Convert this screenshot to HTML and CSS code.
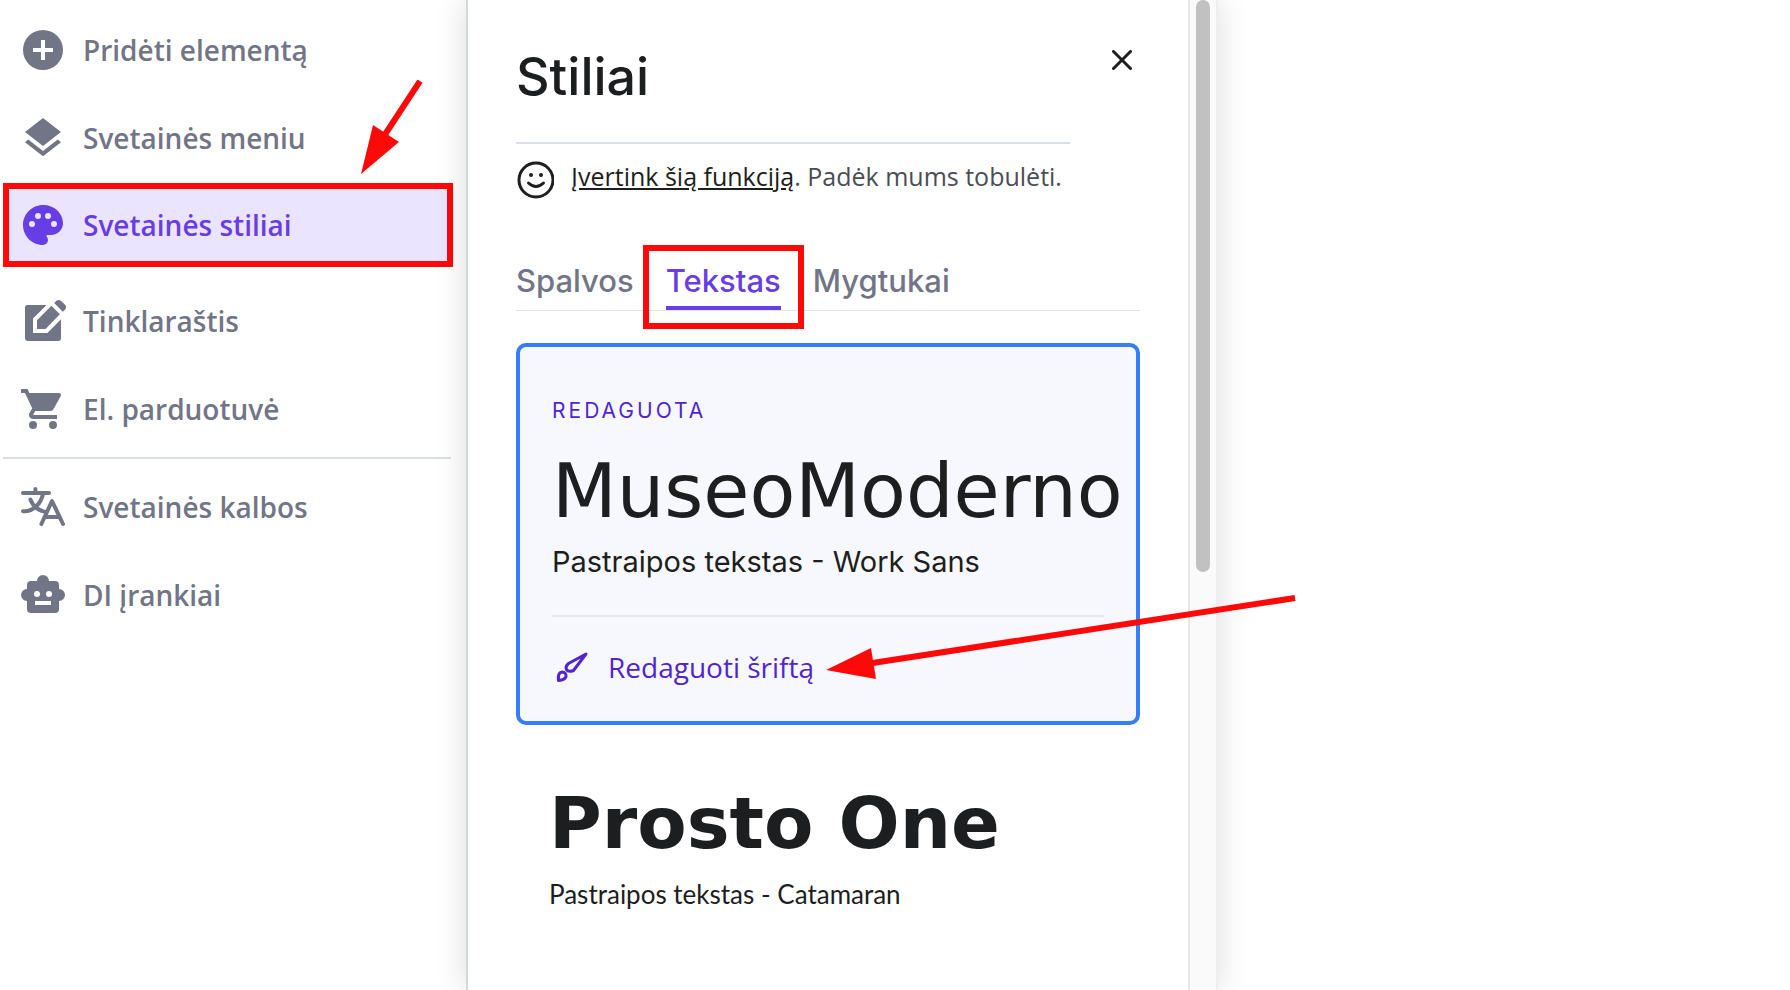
FILE: index.html
```html
<!DOCTYPE html>
<html lang="lt">
<head>
<meta charset="utf-8">
<title>Stiliai</title>
<link rel="stylesheet" href="styles.css">
</head>
<body>
<div class="app">
  <nav class="sidebar">
    <a class="item" href="#"><svg class="icon" viewBox="0 0 24 24"><path d="M12 2a10 10 0 1 0 0 20 10 10 0 0 0 0-20zm5 11h-4v4h-2v-4H7v-2h4V7h2v4h4z"/></svg>Pridėti elementą</a>
    <a class="item" href="#"><svg class="icon" viewBox="0 0 24 24"><path d="M11.99 18.54l-7.37-5.73L3 14.07l9 7 9-7-1.63-1.27zM12 16l7.36-5.73L21 9l-9-7-9 7 1.63 1.27z"/></svg>Svetainės meniu</a>
    <a class="item item-active" href="#"><svg class="icon" viewBox="0 0 24 24"><path d="M12 2C6.500 2 2 6.500 2 12s4.500 10 10 10a2.500 2.500 0 0 0 2.500-2.500c0-.61-.23-1.200-.64-1.670a.5.5 0 0 1 .36-.83H16c3.310 0 6-2.690 6-6 0-4.960-4.490-9-10-9zm5.500 11a1.500 1.500 0 1 1 0-3 1.500 1.500 0 0 1 0 3zm-3-4a1.500 1.500 0 1 1 0-3 1.500 1.500 0 0 1 0 3zM5 11.500a1.500 1.500 0 1 1 3 0 1.500 1.500 0 0 1-3 0zm6-4a1.500 1.500 0 1 1-3 0 1.500 1.500 0 0 1 3 0z"/></svg>Svetainės stiliai</a>
    <a class="item item-spaced" href="#"><svg class="icon" viewBox="0 0 24 24"><path d="M3 5.200Q3 4 4.200 4H13.800L7 10.700V18H14.200L21 11.100V20.800Q21 22 19.800 22H4.200Q3 22 3 20.800z"/><path d="M9 16v-4.400l7.200-7.200 4.200 4.200L13.300 16z"/><path d="M17.600 3l1.100-1.100q1.200-.9 2.500.2l1.700 1.700q1.200 1.200.2 2.400L21.900 7.400z"/></svg>Tinklaraštis</a>
    <a class="item" href="#"><svg class="icon" viewBox="0 0 24 24"><path d="M7 18a2 2 0 1 0 0 4 2 2 0 0 0 0-4zM1 2v2h2l3.600 7.590-1.350 2.450C4.520 15.370 5.480 17 7 17h12v-2H7.420a.25.25 0 0 1-.22-.37L8.100 13h7.450c.75 0 1.410-.41 1.750-1.030l3.580-6.490A1 1 0 0 0 20 4H5.210l-.94-2zm16 16a2 2 0 1 0 0 4 2 2 0 0 0 0-4z"/></svg>El. parduotuvė</a>
    <hr class="rule">
    <a class="item" href="#"><svg class="icon line" viewBox="0 0 24 24"><path d="M2 5h13M8.200 3v2M12 5.500c-1 4.500-4.500 9-10 8.600M5.700 8.300c1.200 3 3.800 5.300 7 6M11.200 20.500L16.500 9l5.500 11.500M13.500 17h6.500"/></svg>Svetainės kalbos</a>
    <a class="item" href="#"><svg class="icon" viewBox="0 0 24 24"><path d="M20 9V7a2 2 0 0 0-2-2h-3a3 3 0 0 0-6 0H6a2 2 0 0 0-2 2v2a3 3 0 0 0 0 6v4a2 2 0 0 0 2 2h12a2 2 0 0 0 2-2v-4a3 3 0 0 0 0-6zM7.500 11.500a1.500 1.500 0 1 1 3 0 1.500 1.500 0 0 1-3 0zM16 17H8v-2h8zm-1-4a1.500 1.500 0 1 1 0-3 1.500 1.500 0 0 1 0 3z"/></svg>DI įrankiai</a>
  </nav>
  <main class="panel">
    <div class="content">
      <header class="head">
        <h1 class="title">Stiliai</h1>
        <button class="close" type="button" aria-label="Uždaryti"><svg viewBox="0 0 20 20"><path d="M1.500 1.500l17 17M18.500 1.500l-17 17"/></svg></button>
      </header>
      <p class="feedback">
        <svg class="smile" viewBox="0 0 38 38"><circle cx="20" cy="19" r="17"/><path d="M12.500 22q7.500 7 15 0"/><circle class="eye" cx="15" cy="14" r="2"/><circle class="eye" cx="25" cy="14" r="2"/></svg>
        <span><a class="rate" href="#">Įvertink šią funkciją</a>. Padėk mums tobulėti.</span>
      </p>
      <div class="tabs" role="tablist">
        <button class="tab" type="button" role="tab">Spalvos</button>
        <button class="tab tab-active" type="button" role="tab" aria-selected="true">Tekstas</button>
        <button class="tab" type="button" role="tab">Mygtukai</button>
      </div>
      <section class="card">
        <p class="badge">REDAGUOTA</p>
        <h2 class="font-name">MuseoModerno</h2>
        <p class="sample sample-work">Pastraipos tekstas - Work Sans</p>
        <button class="edit" type="button"><svg class="brush" viewBox="0 0 32 32"><path d="M30 3L12.500 12.500Q9 15.500 10.500 18.500T17.500 19.500z"/><path d="M2.500 29.500Q1.500 21.500 6 21Q10.500 21.500 10 25.500Q9 29 2.500 29.500z"/></svg>Redaguoti šriftą</button>
      </section>
      <section class="option">
        <h2 class="font-name font-bold">Prosto One</h2>
        <p class="sample sample-cata">Pastraipos tekstas - Catamaran</p>
      </section>
    </div>
    <div class="track"><div class="thumb"></div></div>
  </main>
  <svg class="arrow arrow-menu" viewBox="0 0 64 96"><path d="M60 1L24 56" /><polygon points="1,94 13,45 39,62"/></svg>
  <svg class="arrow arrow-edit" viewBox="0 0 470 86"><path d="M469 3L40 69"/><polygon points="0,75 45,53 50,84"/></svg>
</div>
</body>
</html>
```
FILE: styles.css
```css
* { box-sizing: border-box; }
body {
  margin: 0;
  background: #fff;
  color: #1d1e20;
  font-family: "Open Sans", sans-serif;
}
h1, h2, p { margin: 0; }
button {
  border: 0;
  padding: 0;
  background: none;
  font: inherit;
  color: inherit;
  cursor: pointer;
}
.app {
  position: relative;
  display: flex;
  height: 100vh;
  overflow: hidden;
}
.sidebar {
  flex: 0 0 466px;
  padding: 6px 13px 0 3px;
}
.item {
  display: flex;
  align-items: center;
  gap: 16px;
  height: 88px;
  padding-left: 16px;
  color: #727586;
  font-size: 28px;
  font-weight: 600;
  text-decoration: none;
}
.item-active {
  height: 84px;
  margin: 1px 0 3px;
  padding-left: 10px;
  border: 6px solid #ff0808;
  background: #ebe4ff;
  color: #673de6;
}
.item-spaced { margin-top: 10px; }
.icon {
  width: 48px;
  height: 48px;
  fill: currentColor;
}
.line {
  fill: none;
  stroke: currentColor;
  stroke-width: 2;
  stroke-linecap: round;
  stroke-linejoin: round;
}
.rule {
  height: 2px;
  margin: 4px 2px 4px 0;
  border: 0;
  background: #dadfe5;
}
.panel {
  display: flex;
  flex: 0 0 752px;
  min-width: 0;
  border-left: 2px solid #d5d7df;
  background: #fff;
  box-shadow: 0 0 30px rgba(0, 0, 0, 0.14);
}
.content {
  flex: 1;
  min-width: 0;
  padding: 0 48px;
}
.head {
  display: flex;
  justify-content: space-between;
  align-items: flex-start;
  height: 142px;
  padding-top: 40px;
}
.title {
  font-family: Inter, sans-serif;
  font-size: 52px;
  font-weight: 500;
  line-height: 74px;
}
.close {
  width: 36px;
  height: 44px;
}
.close svg {
  width: 20px;
  height: 20px;
  fill: none;
  stroke: #1d1e20;
  stroke-width: 3;
  stroke-linecap: round;
}
.feedback {
  display: flex;
  gap: 17px;
  width: 554px;
  padding-top: 14px;
  border-top: 2px solid #dadfe5;
  color: #4b4d55;
  font-size: 25px;
  line-height: 36px;
  white-space: nowrap;
}
.smile {
  width: 38px;
  height: 38px;
  margin-top: 3px;
  fill: none;
  stroke: #1d1e20;
  stroke-width: 3;
  stroke-linecap: round;
}
.smile .eye {
  fill: #1d1e20;
  stroke: none;
}
.rate { color: #1d1e20; }
.tabs {
  display: flex;
  gap: 32px;
  margin-top: 48px;
  height: 64px;
  border-bottom: 1px solid #e3e4e6;
}
.tab {
  padding-top: 8px;
  border-bottom: 4px solid transparent;
  color: #727586;
  font-family: Inter, sans-serif;
  font-size: 31px;
  font-weight: 500;
}
.tab-active {
  position: relative;
  border-color: #673de6;
  color: #673de6;
}
.tab-active::after {
  content: "";
  position: absolute;
  inset: -2px -23px -23px;
  border: 6px solid #ff0808;
}
.card {
  margin-top: 32px;
  padding: 48px 32px;
  border: 4px solid #357df9;
  border-radius: 10px;
  background: #f7f8fd;
}
.badge {
  margin-bottom: 16px;
  color: #5025d1;
  font-family: Inter, sans-serif;
  font-size: 21px;
  line-height: 32px;
  letter-spacing: 3px;
}
.font-name {
  font-family: "DejaVu Sans", sans-serif;
  font-size: 75px;
  font-weight: 400;
  line-height: 96px;
  white-space: nowrap;
}
.font-bold {
  font-size: 72px;
  font-weight: 700;
}
.sample {
  font-size: 28px;
  line-height: 46px;
  white-space: nowrap;
}
.sample-work {
  font-family: Inter, sans-serif;
  font-size: 29px;
}
.sample-cata {
  font-family: Lato, sans-serif;
  font-size: 26px;
}
.edit {
  display: flex;
  align-items: center;
  gap: 16px;
  width: 100%;
  margin: 30px 0 -14px;
  padding-top: 30px;
  border-top: 2px solid #e4e5e7;
  color: #5025d1;
  font-size: 28px;
  line-height: 40px;
}
.brush {
  width: 40px;
  height: 32px;
  fill: none;
  stroke: currentColor;
  stroke-width: 3;
  stroke-linejoin: round;
}
.option { padding: 50px 33px; }
.track {
  flex: 0 0 30px;
  padding: 0 6px;
  border-left: 2px solid #e8e8e8;
  border-right: 2px solid #eee;
  background: #fafafa;
}
.thumb {
  height: 572px;
  border-radius: 8px;
  background: #c1c1c1;
}
.arrow {
  position: absolute;
  fill: #ff0808;
  stroke: #ff0808;
}
.arrow path { stroke-width: 6; }
.arrow polygon { stroke: none; }
.arrow-menu {
  left: 360px;
  top: 80px;
  width: 64px;
  height: 96px;
}
.arrow-edit {
  left: 826px;
  top: 595px;
  width: 470px;
  height: 86px;
}
```
